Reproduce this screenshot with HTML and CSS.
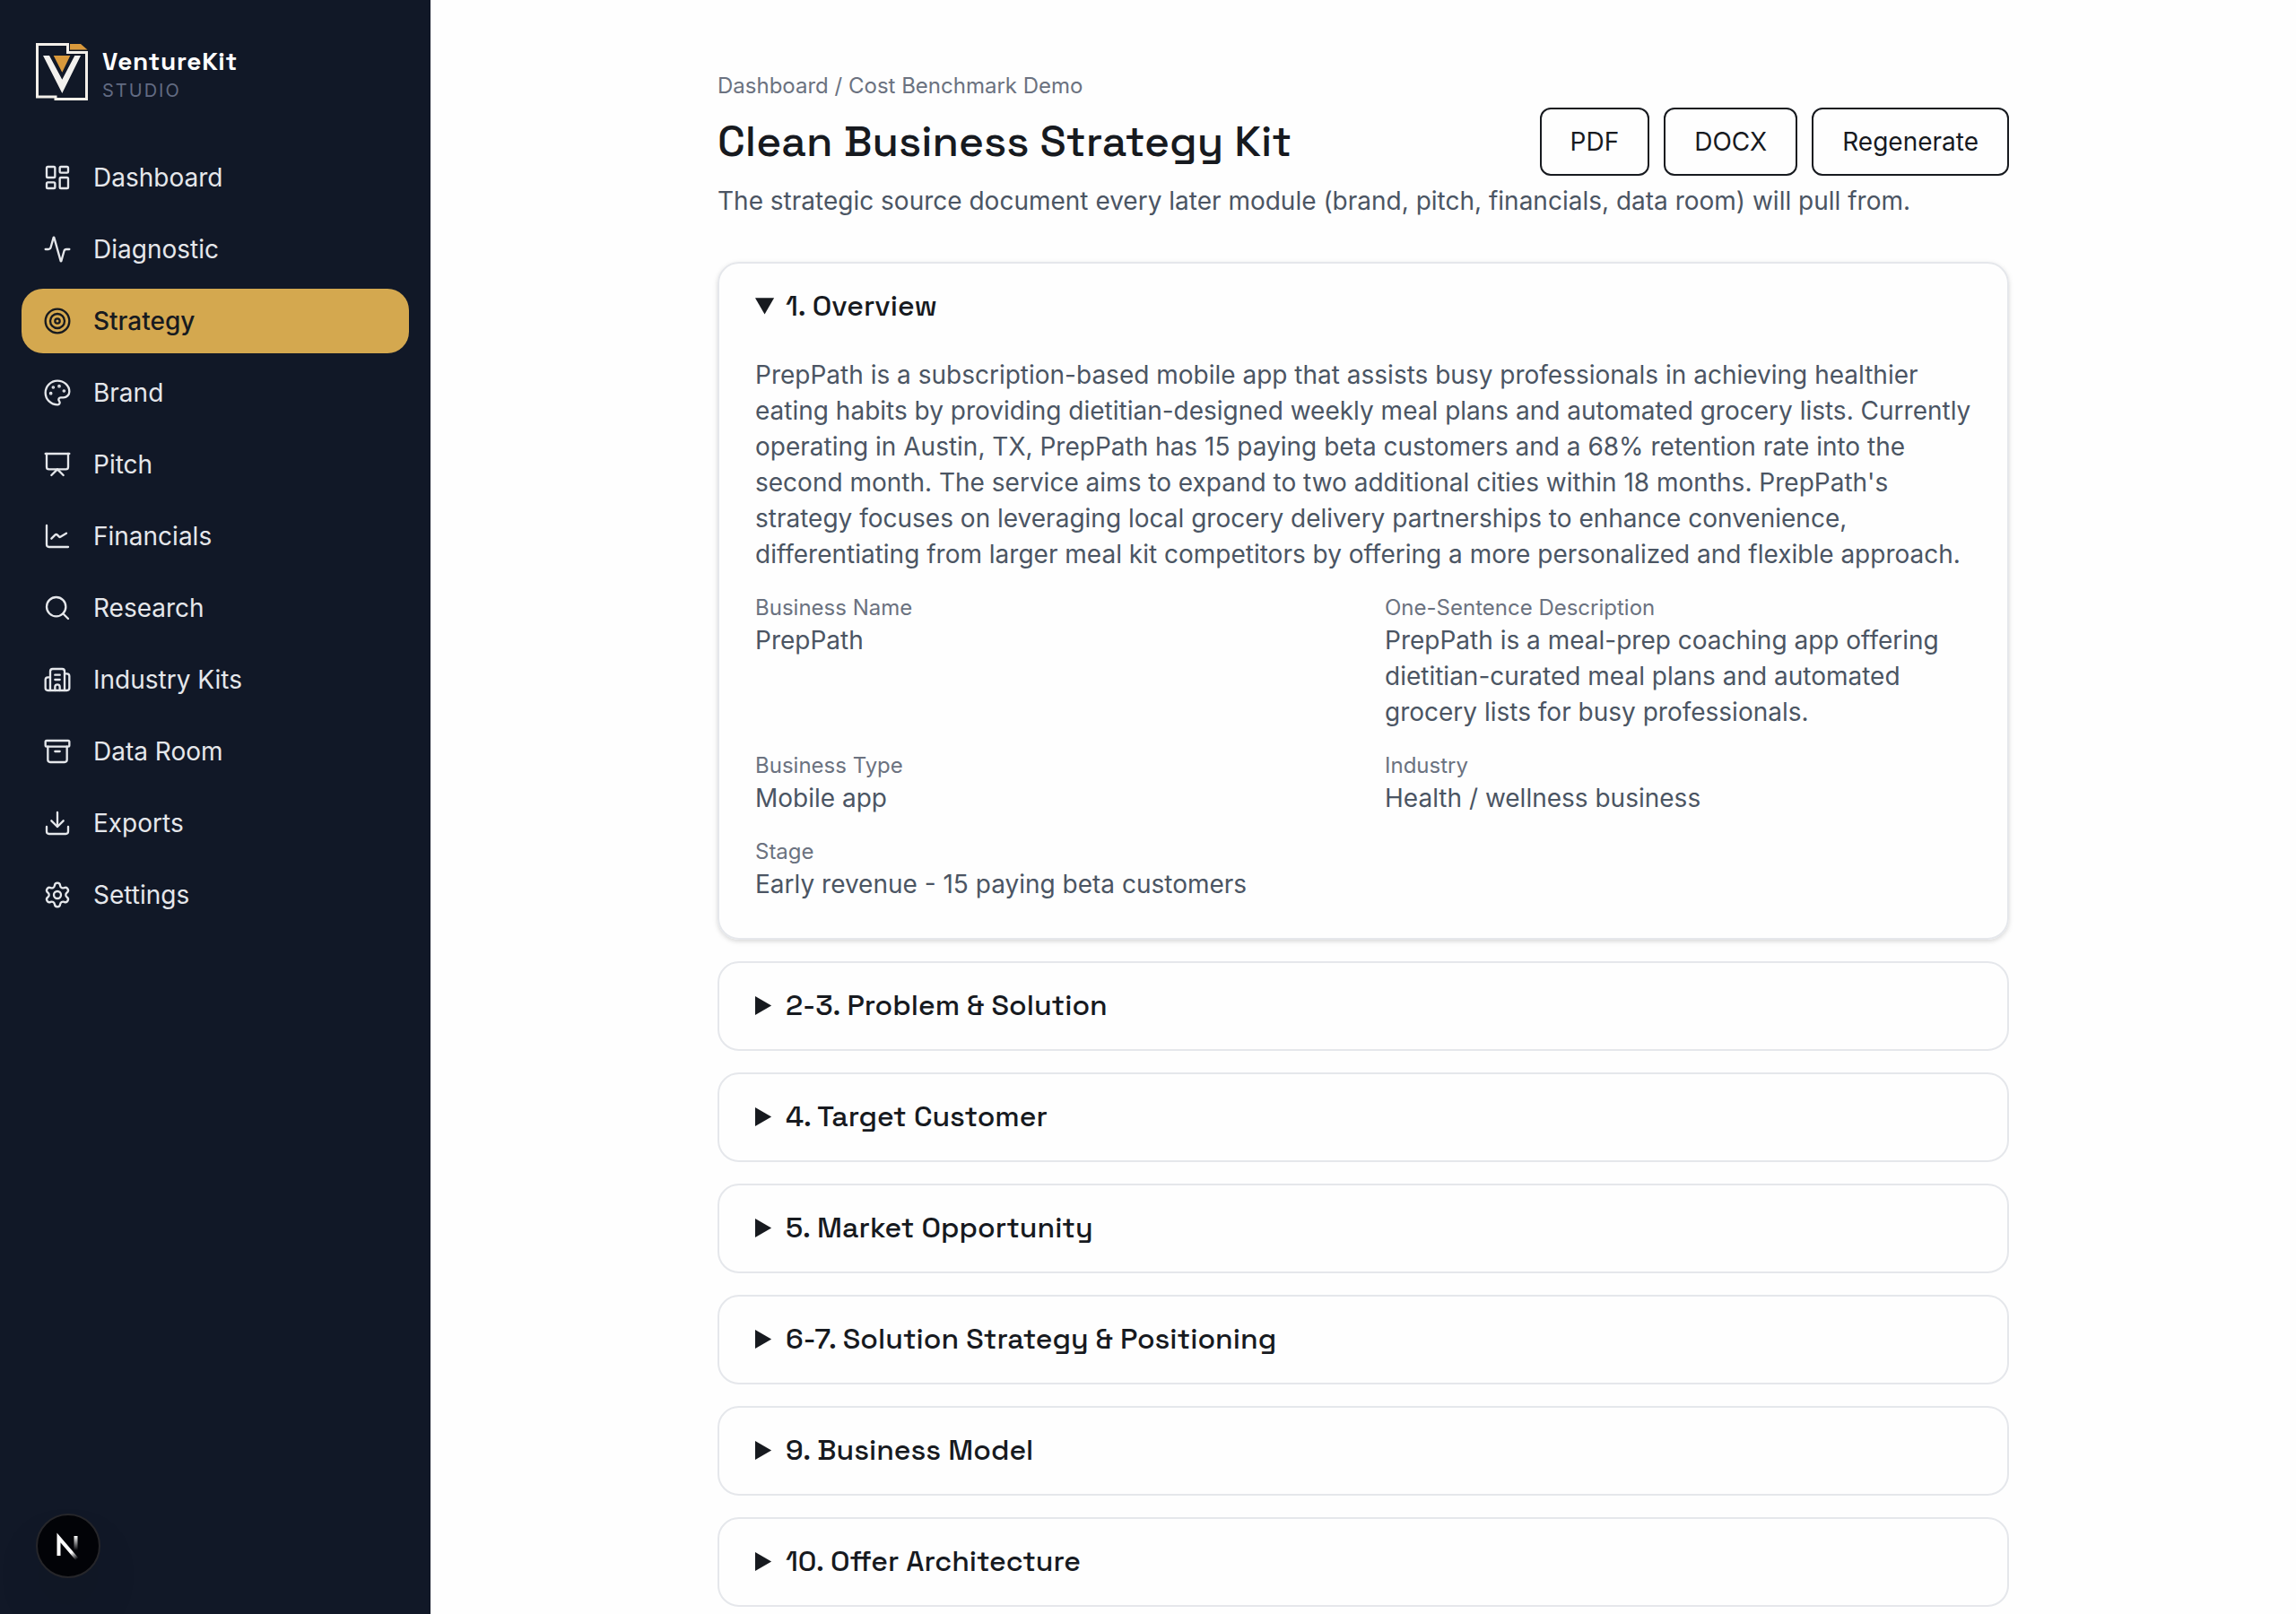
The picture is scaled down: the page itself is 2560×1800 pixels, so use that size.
FILE: index.html
```html
<!DOCTYPE html>
<html lang="en">
<head>
<meta charset="utf-8">
<meta name="viewport" content="width=device-width, initial-scale=1">
<title>Clean Business Strategy Kit - VentureKit Studio</title>
<link rel="stylesheet" href="styles.css">
</head>
<body>
<div class="layout">
  <aside class="sidebar">
    <div class="brand">
      <svg class="brand-mark" viewBox="0 0 60 66" aria-hidden="true">
        <path d="M1.5 1.5H35.5V10.500H56.500V62.500H22V60H1.500Z" fill="none" stroke="#f3efe9" stroke-width="3"/>
        <path d="M38 1H50L57.500 7.500H38Z" fill="#d9993c"/>
        <path d="M8 14H15L29.300 40.700L43.300 14H50L29.300 56Z" fill="#f3f1ee"/>
        <path d="M19.700 14H38.300L29.300 32.700Z" fill="#d9993c"/>
      </svg>
      <div class="brand-text">
        <span class="brand-name">VentureKit</span>
        <span class="brand-sub">STUDIO</span>
      </div>
    </div>
    <nav class="nav" aria-label="Main">
      <a class="nav-link" href="#dashboard"><svg class="icon" viewBox="0 0 24 24" aria-hidden="true"><rect width="7" height="9" x="3" y="3" rx="1"/><rect width="7" height="5" x="14" y="3" rx="1"/><rect width="7" height="9" x="14" y="12" rx="1"/><rect width="7" height="5" x="3" y="16" rx="1"/></svg>Dashboard</a>
      <a class="nav-link" href="#diagnostic"><svg class="icon" viewBox="0 0 24 24" aria-hidden="true"><path d="M22 12h-2.480a2 2 0 0 0-1.930 1.460l-2.350 8.360a.25.25 0 0 1-.48 0L9.240 2.180a.25.25 0 0 0-.48 0l-2.350 8.360A2 2 0 0 1 4.490 12H2"/></svg>Diagnostic</a>
      <a class="nav-link nav-link-active" href="#strategy" aria-current="page"><svg class="icon" viewBox="0 0 24 24" aria-hidden="true"><circle cx="12" cy="12" r="10"/><circle cx="12" cy="12" r="6"/><circle cx="12" cy="12" r="2"/></svg>Strategy</a>
      <a class="nav-link" href="#brand"><svg class="icon" viewBox="0 0 24 24" aria-hidden="true"><path d="M12 22a1 1 0 0 1 0-20 10 9 0 0 1 10 9 5 5 0 0 1-5 5h-2.250a1.750 1.750 0 0 0-1.400 2.800l.3.400a1.750 1.750 0 0 1-1.400 2.800z"/><circle cx="13.500" cy="6.500" r=".5" fill="currentColor"/><circle cx="17.500" cy="10.500" r=".5" fill="currentColor"/><circle cx="6.500" cy="12.500" r=".5" fill="currentColor"/><circle cx="8.500" cy="7.500" r=".5" fill="currentColor"/></svg>Brand</a>
      <a class="nav-link" href="#pitch"><svg class="icon" viewBox="0 0 24 24" aria-hidden="true"><path d="M2 3h20"/><path d="M21 3v11a2 2 0 0 1-2 2H5a2 2 0 0 1-2-2V3"/><path d="m7 21 5-5 5 5"/></svg>Pitch</a>
      <a class="nav-link" href="#financials"><svg class="icon" viewBox="0 0 24 24" aria-hidden="true"><path d="M3 3v16a2 2 0 0 0 2 2h16"/><path d="m7 14 3-3q1-1 2 0l1.500 1.500q.5.5 1 0L19.500 9.500"/></svg>Financials</a>
      <a class="nav-link" href="#research"><svg class="icon" viewBox="0 0 24 24" aria-hidden="true"><path d="m21 21-4.340-4.340"/><circle cx="11" cy="11" r="8"/></svg>Research</a>
      <a class="nav-link" href="#industry-kits"><svg class="icon" viewBox="0 0 24 24" aria-hidden="true"><path d="M10 12h4"/><path d="M10 8h4"/><path d="M14 21v-3a2 2 0 0 0-4 0v3"/><path d="M6 10H4a2 2 0 0 0-2 2v7a2 2 0 0 0 2 2h16a2 2 0 0 0 2-2V9a2 2 0 0 0-2-2h-2"/><path d="M6 21V5a2 2 0 0 1 2-2h8a2 2 0 0 1 2 2v16"/></svg>Industry Kits</a>
      <a class="nav-link" href="#data-room"><svg class="icon" viewBox="0 0 24 24" aria-hidden="true"><rect width="20" height="5" x="2" y="3" rx="1"/><path d="M4 8v11a2 2 0 0 0 2 2h12a2 2 0 0 0 2-2V8"/><path d="M10 12h4"/></svg>Data Room</a>
      <a class="nav-link" href="#exports"><svg class="icon" viewBox="0 0 24 24" aria-hidden="true"><path d="M12 15V3"/><path d="M21 15v4a2 2 0 0 1-2 2H5a2 2 0 0 1-2-2v-4"/><path d="m7 10 5 5 5-5"/></svg>Exports</a>
      <a class="nav-link" href="#settings"><svg class="icon" viewBox="0 0 24 24" aria-hidden="true"><path d="M9.671 4.136a2.340 2.340 0 0 1 4.659 0 2.340 2.340 0 0 0 3.319 1.915 2.340 2.340 0 0 1 2.330 4.033 2.340 2.340 0 0 0 0 3.831 2.340 2.340 0 0 1-2.330 4.033 2.340 2.340 0 0 0-3.319 1.915 2.340 2.340 0 0 1-4.659 0 2.340 2.340 0 0 0-3.320-1.915 2.340 2.340 0 0 1-2.330-4.033 2.340 2.340 0 0 0 0-3.831A2.340 2.340 0 0 1 6.350 6.051a2.340 2.340 0 0 0 3.319-1.915"/><circle cx="12" cy="12" r="3"/></svg>Settings</a>
    </nav>
  </aside>

  <main class="main">
    <div class="content">
      <nav class="breadcrumb" aria-label="Breadcrumb"><a href="#dashboard">Dashboard</a> / <a href="#project">Cost Benchmark Demo</a></nav>
      <header class="page-header">
        <h1 class="page-title">Clean Business Strategy Kit</h1>
        <div class="actions">
          <button class="button" type="button">PDF</button>
          <button class="button" type="button">DOCX</button>
          <button class="button" type="button">Regenerate</button>
        </div>
      </header>
      <p class="page-lead">The strategic source document every later module (brand, pitch, financials, data room) will pull from.</p>

      <div class="sections">
        <details class="card" open>
          <summary class="card-title">1. Overview</summary>
          <div class="card-body">
            <p class="text">PrepPath is a subscription-based mobile app that assists busy professionals in achieving healthier eating habits by providing dietitian-designed weekly meal plans and automated grocery lists. Currently operating in Austin, TX, PrepPath has 15 paying beta customers and a 68% retention rate into the second month. The service aims to expand to two additional cities within 18 months. PrepPath's strategy focuses on leveraging local grocery delivery partnerships to enhance convenience, differentiating from larger meal kit competitors by offering a more personalized and flexible approach.</p>
            <dl class="facts">
              <div><dt>Business Name</dt><dd>PrepPath</dd></div>
              <div><dt>One-Sentence Description</dt><dd>PrepPath is a meal-prep coaching app offering dietitian-curated meal plans and automated grocery lists for busy professionals.</dd></div>
              <div><dt>Business Type</dt><dd>Mobile app</dd></div>
              <div><dt>Industry</dt><dd>Health / wellness business</dd></div>
              <div><dt>Stage</dt><dd>Early revenue - 15 paying beta customers</dd></div>
            </dl>
          </div>
        </details>
        <details class="card"><summary class="card-title">2-3. Problem &amp; Solution</summary></details>
        <details class="card"><summary class="card-title">4. Target Customer</summary></details>
        <details class="card"><summary class="card-title">5. Market Opportunity</summary></details>
        <details class="card"><summary class="card-title">6-7. Solution Strategy &amp; Positioning</summary></details>
        <details class="card"><summary class="card-title">9. Business Model</summary></details>
        <details class="card"><summary class="card-title">10. Offer Architecture</summary></details>
      </div>
    </div>
  </main>
</div>

<button class="dev-badge" type="button" aria-label="Open developer tools">
  <svg class="dev-badge-mark" viewBox="0 0 40 40" fill="none" aria-hidden="true">
    <defs>
      <linearGradient id="fade-diagonal" gradientUnits="userSpaceOnUse" x1="21" y1="21" x2="31" y2="34">
        <stop offset="0.400" stop-color="#fff"/><stop offset="1" stop-color="#fff" stop-opacity="0"/>
      </linearGradient>
      <linearGradient id="fade-stem" gradientUnits="userSpaceOnUse" x1="28" y1="9" x2="28" y2="25">
        <stop stop-color="#fff"/><stop offset="1" stop-color="#fff" stop-opacity="0"/>
      </linearGradient>
    </defs>
    <path d="M9.500 31V11L31 36" stroke="url(#fade-diagonal)" stroke-width="4"/>
    <path d="M28.500 9V25" stroke="url(#fade-stem)" stroke-width="4"/>
  </svg>
</button>
</body>
</html>
```
FILE: styles.css
```css
:root {
  --navy: #111827;
  --gold: #d4a84f;
  --ink: #171a1f;
  --slate: #4b5563;
  --muted: #6b7280;
  --line: #e5e7eb;
  --heading: "Space Grotesk", Inter, "Liberation Sans", sans-serif;
}

* { box-sizing: border-box; }

body {
  margin: 0;
  background: #fefefe;
  color: var(--ink);
  font: 400 28px/40px Inter, "Liberation Sans", sans-serif;
}

h1, p, dl, dd { margin: 0; }
a { color: inherit; text-decoration: none; }

.layout {
  display: grid;
  grid-template-columns: 480px minmax(0, 1fr);
  min-height: 100vh;
}

.sidebar {
  padding: 48px 24px;
  background: var(--navy);
  color: #e5e7eb;
}

.brand {
  display: flex;
  gap: 14px;
  padding: 0 16px;
  margin-bottom: 48px;
}
.brand-mark { width: 60px; height: 66px; }
.brand-text { display: flex; flex-direction: column; }
.brand-name {
  color: #fff;
  font: 600 28px/40px var(--heading);
  letter-spacing: 0.025em;
}
.brand-sub {
  color: #626b82;
  font-size: 20px;
  line-height: 26px;
  font-weight: 400;
  letter-spacing: 0.1em;
}

.nav { display: flex; flex-direction: column; gap: 8px; }
.nav-link {
  display: flex;
  align-items: center;
  gap: 24px;
  padding: 16px 24px;
  border-radius: 24px;
}
.nav-link-active {
  background: var(--gold);
  color: var(--ink);
  font-weight: 500;
}
.icon {
  width: 32px;
  height: 32px;
  fill: none;
  stroke: currentColor;
  stroke-width: 1.75;
  stroke-linecap: round;
  stroke-linejoin: round;
}

.main { padding: 80px 48px 8px; }
.content { max-width: 1440px; margin: 0 auto; }

.breadcrumb {
  color: var(--muted);
  font-size: 24px;
  line-height: 32px;
}
.page-header {
  display: flex;
  align-items: center;
  justify-content: space-between;
  gap: 32px;
  margin: 8px 0;
}
.page-title { font: 500 48px/64px var(--heading); }
.actions { display: flex; gap: 16px; }
.button {
  padding: 16px 32px;
  border: 2px solid var(--ink);
  border-radius: 12px;
  background: transparent;
  color: var(--ink);
  font: inherit;
}
.page-lead { color: var(--slate); }

.sections {
  display: flex;
  flex-direction: column;
  gap: 24px;
  margin-top: 48px;
}
.card {
  border: 2px solid var(--line);
  border-radius: 24px;
}
.card[open] { box-shadow: 0 2px 6px rgba(0, 0, 0, 0.1), 0 2px 4px rgba(0, 0, 0, 0.06); }
.card-title {
  padding: 24px 40px 26px;
  font: 500 32px/46px var(--heading);
  cursor: pointer;
}
.card-body { padding: 8px 40px 40px; color: var(--slate); }
.facts {
  display: grid;
  grid-template-columns: repeat(2, minmax(0, 1fr));
  gap: 24px 48px;
  margin-top: 24px;
}
.facts dt {
  color: var(--muted);
  font-size: 24px;
  line-height: 32px;
}

.dev-badge {
  position: fixed;
  left: 40px;
  bottom: 40px;
  display: grid;
  place-items: center;
  width: 72px;
  height: 72px;
  padding: 0;
  border: 2px solid #26262a;
  border-radius: 50%;
  background: #020307;
  box-shadow: 0 32px 64px -16px rgba(0, 0, 0, 0.24);
}
.dev-badge-mark { width: 40px; height: 40px; }
```
